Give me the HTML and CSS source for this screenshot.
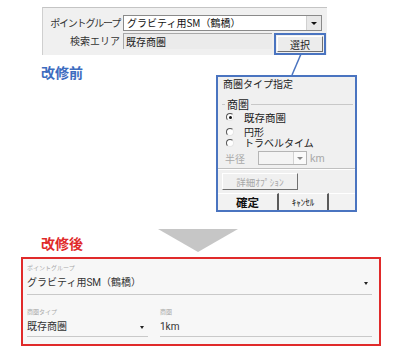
FILE: index.html
```html
<!DOCTYPE html>
<html lang="ja">
<head>
<meta charset="UTF-8">
<title>商圏タイプ 改修前・改修後</title>
<link rel="stylesheet" href="styles.css">
</head>
<body>
<div class="page">
  <!-- 改修前: 旧画面 -->
  <div class="legacy">
    <div class="legacy-label tight">ポイントグループ</div>
    <div class="combo">
      <span class="combo-text">グラビティ用SM（鶴橋）</span>
      <span class="combo-btn"><i class="tri"></i></span>
    </div>
    <div class="legacy-label">検索エリア</div>
    <div class="legacy-row">
      <div class="field-ro">既存商圏</div>
      <div class="mark"><button class="win-btn">選択</button></div>
    </div>
  </div>

  <div class="before-row">
    <div class="tag tag-before">改修前</div>
    <div class="dialog">
      <div class="dlg-title">商圏タイプ指定</div>
      <div class="group-legend"><span>商圏</span></div>
      <div class="radio-row first"><span class="radio checked"></span>既存商圏</div>
      <div class="radio-row gap"><span class="radio"></span>円形</div>
      <div class="radio-row"><span class="radio"></span>トラベルタイム</div>
      <div class="radius-row">
        <span class="dim">半径</span>
        <span class="mini-combo"><span class="mini-btn"><i class="tri dim-tri"></i></span></span>
        <span class="dim km">km</span>
      </div>
      <div class="dlg-sep"></div>
      <button class="win-btn opt-btn">詳細ｵﾌﾟｼｮﾝ</button>
      <div class="dlg-actions">
        <button class="act act-ok">確定</button>
        <button class="act act-cancel">ｷｬﾝｾﾙ</button>
        <button class="act act-blank"></button>
      </div>
    </div>
  </div>

  <div class="after-row">
    <div class="tag tag-after">改修後</div>
    <div class="down-arrow"></div>
  </div>

  <!-- 改修後: 新画面 -->
  <div class="modern">
    <div class="m-field">
      <div class="m-label">ポイントグループ</div>
      <div class="m-value">グラビティ用SM（鶴橋）<i class="caret"></i></div>
    </div>
    <div class="m-row">
      <div class="m-field m-type">
        <div class="m-label">商圏タイプ</div>
        <div class="m-value">既存商圏<i class="caret"></i></div>
      </div>
      <div class="m-field m-area">
        <div class="m-label">商圏</div>
        <div class="m-value">1km</div>
      </div>
    </div>
  </div>

  <svg class="connector" width="20" height="24" viewBox="0 0 20 24"><line x1="13" y1="0" x2="4" y2="21" stroke="#4a74c0" stroke-width="1.5"/></svg>
</div>
</body>
</html>
```

FILE: styles.css
```css
:root{
  --win-bg:#f0f0f0;
  --mark-blue:#4a74c0;
  --after-red:#e02a2a;
}
body{margin:0;background:#fff;font-family:"Noto Sans CJK JP","Noto Sans",sans-serif;color:#222;}
.page{position:relative;width:399px;height:347px;overflow:hidden;}

/* legacy panel */
.legacy{margin:7px 0 0 42px;width:284px;height:40px;background:var(--win-bg);border-top:1px solid #c4c4c4;border-left:1px solid #cfcfcf;display:grid;grid-template-columns:77px 1fr;grid-template-rows:16px 22px;column-gap:3px;row-gap:2px;padding-top:7px;font-size:10px;}
.legacy-label{text-align:right;line-height:16px;color:#333;white-space:nowrap;}
.legacy-label.tight{letter-spacing:-1.2px;}
.combo{width:197px;height:14px;background:#fff;border:1px solid #8a8a8a;display:flex;align-items:center;justify-content:space-between;}
.combo-text{padding-left:3px;line-height:14px;color:#111;white-space:nowrap;}
.combo-btn{width:14px;height:14px;background:#e8e8e8;border-left:1px solid #d0d0d0;display:flex;align-items:center;justify-content:center;}
.tri{display:block;width:0;height:0;border-left:3px solid transparent;border-right:3px solid transparent;border-top:3px solid #111;}
.legacy-row{display:flex;align-items:flex-start;}
.field-ro{width:146px;height:15px;line-height:15px;padding-left:2px;background:#ebebeb;border-top:1px solid #a8a8a8;border-left:1px solid #a8a8a8;color:#222;}
.mark{margin-left:2px;border:2px solid var(--mark-blue);padding:1px;}
.win-btn{display:block;font:inherit;font-size:10px;padding:0;margin:0;background:#ececec;border:1px solid;border-color:#fff #707070 #707070 #fff;color:#222;cursor:pointer;}
.mark .win-btn{width:46px;height:16px;line-height:13px;}

/* before */
.before-row{display:flex;align-items:flex-start;padding-left:41px;}
.tag{width:42px;font-size:14px;font-weight:bold;line-height:16px;white-space:nowrap;}
.tag-before{margin-top:9px;color:#3d6cc0;}
.dialog{margin:20px 0 0 133px;width:137px;height:133px;border:2px solid var(--mark-blue);background:var(--win-bg);font-size:10px;color:#222;}
.dlg-title{height:14px;line-height:14px;padding-left:5px;font-size:10px;}
.group-legend{margin:6px 2px 0 4px;height:14px;display:flex;align-items:center;}
.group-legend::before{content:"";width:3px;border-top:1px solid #c8c8c8;}
.group-legend::after{content:"";flex:1;border-top:1px solid #c8c8c8;}
.group-legend span{padding:0 2px;font-size:11px;line-height:14px;}
.radio-row{display:flex;align-items:center;height:11px;line-height:11px;padding-left:8px;white-space:nowrap;font-size:10px;}
.radio-row.first{height:12px;font-size:10.5px;}
.radio-row.gap{margin-top:3px;}
.radio{width:6px;height:6px;border-radius:50%;border:1px solid;border-color:#555 #e6e6e6 #e6e6e6 #555;margin-right:10px;position:relative;background:#fff;}
.radio.checked::after{content:"";position:absolute;left:1.5px;top:1.5px;width:3px;height:3px;border-radius:50%;background:#111;}
.radius-row{display:flex;align-items:center;margin-top:3px;height:14px;padding-left:7px;}
.dim{color:#a8a8a8;}
.mini-combo{margin-left:13px;width:47px;height:12px;border:1px solid #b5b5b5;background:#f4f4f4;display:flex;justify-content:flex-end;}
.mini-btn{width:12px;height:12px;border-left:1px solid #d2d2d2;background:#fafafa;display:flex;align-items:center;justify-content:center;}
.dim-tri{border-top-color:#888;}
.km{margin-left:3px;font-family:"Liberation Sans",sans-serif;font-size:11px;}
.dlg-sep{margin-top:3px;border-top:1px solid #c0c0c0;border-bottom:1px solid #fff;}
.opt-btn{margin:3px 0 0 4px;width:76px;height:17px;font-size:9.5px;color:#a8a8a8;background:#f0f0f0;}
.dlg-actions{display:flex;margin-top:3px;height:17px;}
.act{font:inherit;margin:0;padding:0;height:17px;background:#f2f2f2;border:0;border-top:1px solid #fff;border-right:2px solid #5a5a5a;color:#111;}
.act-ok{width:61px;font-size:11.5px;font-weight:bold;}
.act-cancel{width:50px;font-size:9px;}
.act-blank{flex:1;border-right:0;}

/* after */
.after-row{display:flex;align-items:flex-start;padding-left:41px;margin-top:17px;}
.tag-after{margin-top:6px;color:var(--after-red);}
.down-arrow{margin-left:75px;width:0;height:0;border-left:40px solid transparent;border-right:40px solid transparent;border-top:23px solid #c6c6c6;}
.modern{margin:5px 0 0 21px;width:345px;height:85px;border:2px solid var(--after-red);background:#f7f7f7;padding:0 7px 0 4px;}
.m-field{border-bottom:1px solid #c9c9c9;padding:4px 0 3px;}
.m-label{font-size:6px;line-height:10px;color:#aaa;}
.m-value{display:flex;align-items:center;justify-content:space-between;margin-top:2px;font-family:Roboto,"Noto Sans CJK JP",sans-serif;font-size:10px;line-height:16px;color:#333;}
.caret{display:block;width:0;height:0;margin-right:4px;border-left:2.5px solid transparent;border-right:2.5px solid transparent;border-top:3px solid #222;}
.m-row{display:flex;column-gap:12px;margin-top:12px;}
.m-row .m-field{padding:0 0 1px;}
.m-type{width:121px;}
.m-area{flex:1;}

.connector{position:absolute;left:288px;top:54px;}
```
